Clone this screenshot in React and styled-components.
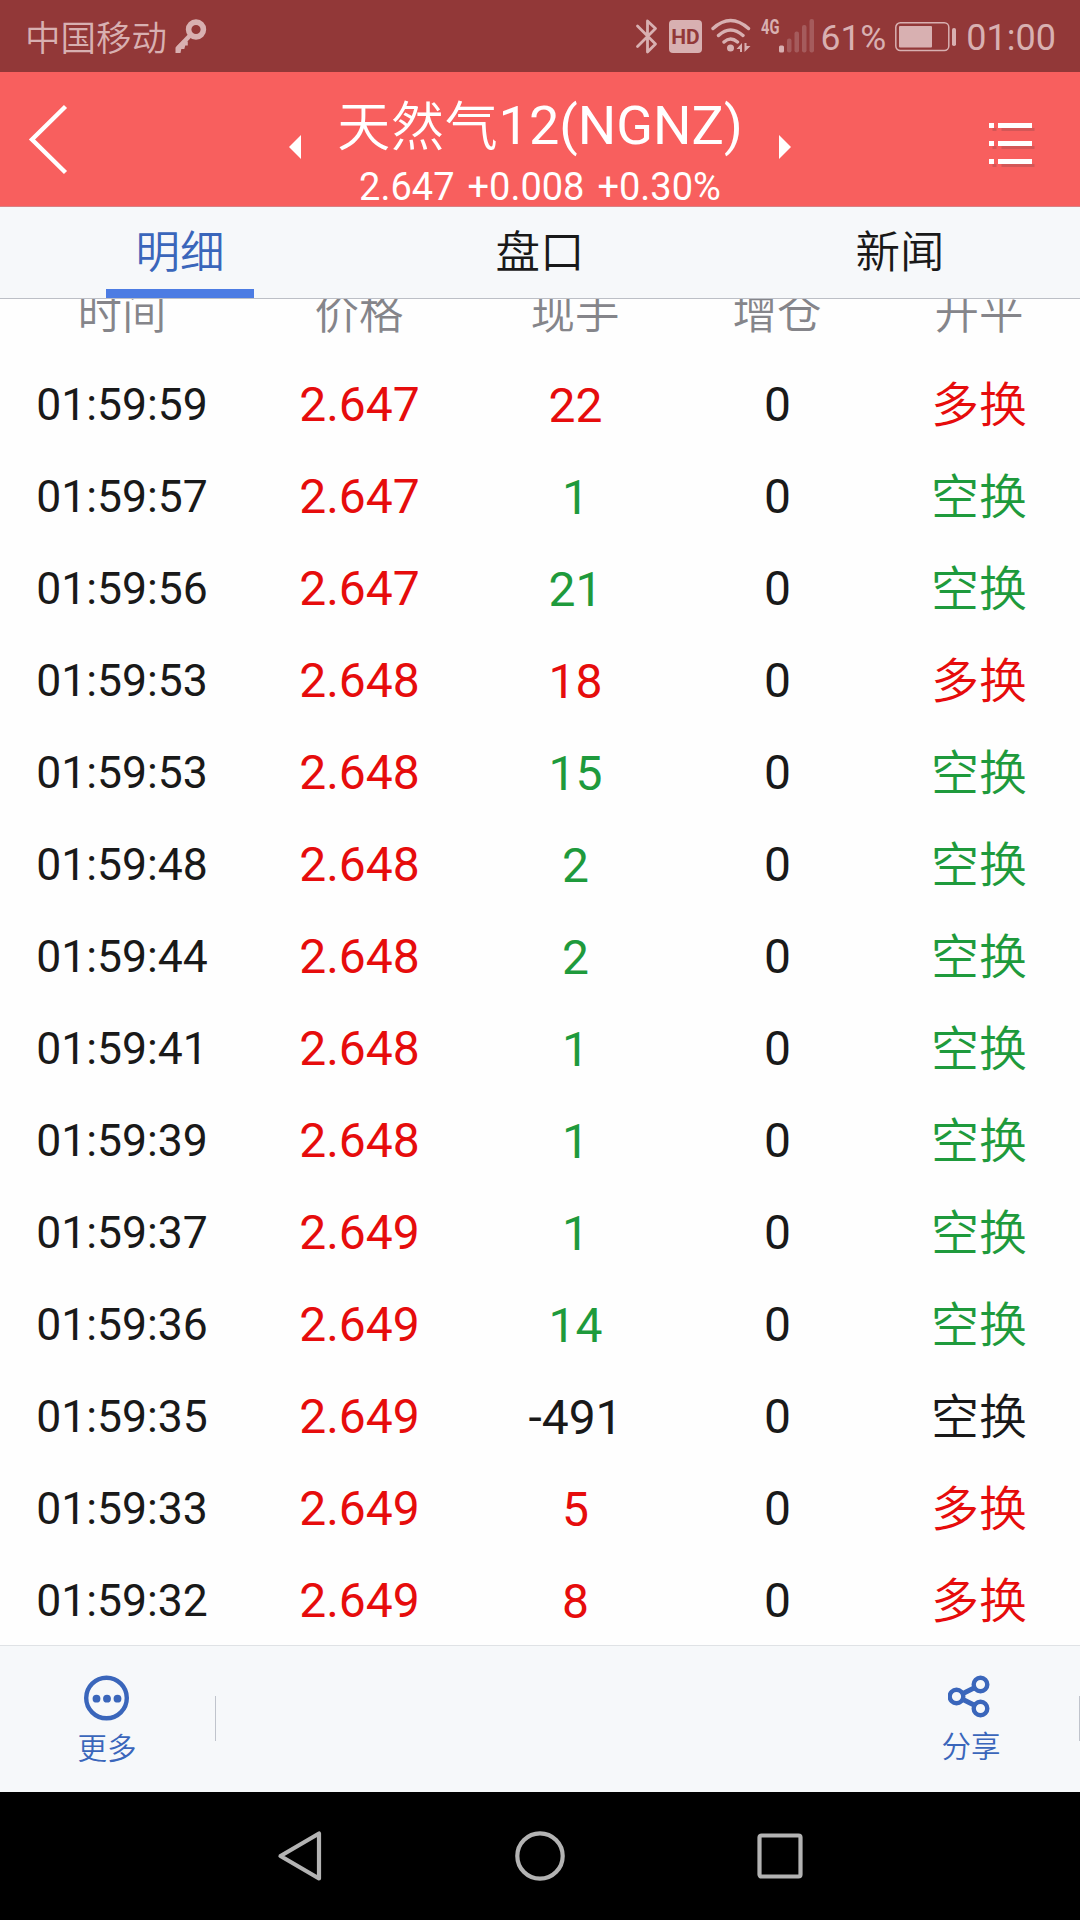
import React from "react";
import styled, { createGlobalStyle } from "styled-components";

const GlobalStyle = createGlobalStyle`
  * { box-sizing: border-box; }
  body { margin: 0; background: #fff; }
`;

const ink = "#d8b0b1";
const blue = "#3a66bb";
const cjk = `"Noto Sans CJK SC DemiLight", "Noto Sans CJK SC", sans-serif`;

const Screen = styled.div`
  width: 1080px;
  height: 1920px;
  display: flex;
  flex-direction: column;
  overflow: hidden;
  background: #fefefe;
  color: #191919;
  font-family: Roboto, ${cjk};
`;

const StatusBar = styled.div`
  height: 72px;
  flex: none;
  display: flex;
  align-items: center;
  justify-content: space-between;
  padding: 0 24px 0 25px;
  background: #923838;
  color: ${ink};
  font-size: 36px;
  line-height: 42px;
  svg { display: block; flex: none; }
`;

const StatusGroup = styled.div`
  display: flex;
  align-items: center;
`;

const StatusText = styled.span`
  padding-top: 3px;
  white-space: nowrap;
  margin-left: ${(p) => p.$left || 0}px;
`;

const Carrier = styled.span`
  padding-top: 5px;
  margin-right: 6px;
  font-size: 35.5px;
  font-weight: 350;
`;

const Percent = styled(StatusText)`
  font-size: 35.5px;
`;

const HdBadge = styled.span`
  width: 33px;
  height: 33px;
  margin: 0 9.5px 0 11px;
  border-radius: 4px;
  background: ${ink};
  color: #923838;
  font: 700 21px/35px Roboto, sans-serif;
  text-align: center;
`;

const NetworkLabel = styled.span`
  width: 18px;
  height: 34px;
  margin-left: 9.5px;
  font: 700 21px/16px Roboto, sans-serif;
  span {
    display: inline-block;
    transform: scaleX(0.7);
    transform-origin: left;
  }
`;

const Header = styled.header`
  height: 135px;
  flex: none;
  display: grid;
  grid-template-columns: 289px 502px 289px;
  background: #f85f5e;
  border-bottom: 1px solid #d98184;
  color: #fff;
  svg { display: block; }
`;

const BackButton = styled.div`
  padding: 32px 0 0 28px;
`;

const MenuButton = styled.div`
  padding: 49px 0 0 193.5px;
`;

const TitleRow = styled.div`
  display: flex;
  justify-content: space-between;
`;

const Arrow = styled.div`
  width: 12px;
  padding-top: 63px;
`;

const TitleBlock = styled.div`
  display: flex;
  flex-direction: column;
  align-items: center;
  white-space: nowrap;
`;

const Title = styled.div`
  display: flex;
  margin-top: 22px;
  font-size: 54px;
  line-height: 64px;
`;

const TitleName = styled.span`
  padding-top: 2px;
  font-size: 53px;
  font-weight: 350;
  letter-spacing: 0.8px;
`;

const Quote = styled.div`
  margin-top: 4px;
  font-size: 38px;
  line-height: 46px;
  word-spacing: 3.5px;
`;

const Tabs = styled.nav`
  height: 92px;
  flex: none;
  display: grid;
  grid-template-columns: repeat(3, 1fr);
  justify-items: center;
  background: #f6f8fa;
  border-bottom: 1px solid #bcbfc6;
`;

const Tab = styled.div`
  width: 148px;
  height: 91px;
  border-bottom: 9px solid ${(p) => (p.$active ? "#4c7ce3" : "transparent")};
  color: ${(p) => (p.$active ? blue : "#191919")};
  font-size: 44.5px;
  font-weight: 350;
  line-height: 92px;
  text-align: center;
`;

const Viewport = styled.main`
  height: 1346px;
  flex: none;
  overflow: hidden;
`;

const Row = styled.div`
  height: 92px;
  display: grid;
  grid-template-columns: 244px 230px 202px 202px 202px;
  line-height: 92px;
  text-align: center;
  font-size: 48px;
`;

const HeadRow = styled(Row)`
  margin-top: -32px;
  color: #85858a;
  font-size: 44.5px;
  font-weight: 350;
  line-height: 94px;
`;

const Time = styled.span`
  font-size: 44.5px;
`;

const tones = { red: "#e60c0c", green: "#1e9a3c", black: "#191919" };

const Value = styled.span`
  padding-left: 1px;
  color: ${(p) => tones[p.$tone || "black"]};
`;

const Lots = styled(Value)`
  line-height: 93px;
`;

const Side = styled(Value)`
  padding-left: 0;
  font-weight: 350;
  line-height: 94px;
`;

const Footer = styled.footer`
  height: 147px;
  flex: none;
  display: flex;
  justify-content: space-between;
  background: #f6f8fa;
  border-top: 1px solid #dfe2e5;
`;

const FooterItem = styled.div`
  width: 216px;
  display: grid;
  grid-template-columns: 215px 1px;
`;

const FooterAction = styled.div`
  display: flex;
  flex-direction: column;
  align-items: center;
  padding: 29px 1px 0 0;
  color: ${blue};
  font-size: 29.5px;
  font-weight: 350;
  line-height: 36px;
  svg { display: block; }
`;

const FooterLabel = styled.span`
  margin-top: ${(p) => p.$gap}px;
`;

const Divider = styled.i`
  height: 45px;
  margin-top: 50px;
  background: #c0c4cc;
`;

const SystemNav = styled.div`
  height: 128px;
  flex: none;
  display: flex;
  justify-content: center;
  align-items: center;
  gap: 180px;
  background: #000;
`;

const trades = [
  ["01:59:59", "2.647", "22", "red"],
  ["01:59:57", "2.647", "1", "green"],
  ["01:59:56", "2.647", "21", "green"],
  ["01:59:53", "2.648", "18", "red"],
  ["01:59:53", "2.648", "15", "green"],
  ["01:59:48", "2.648", "2", "green"],
  ["01:59:44", "2.648", "2", "green"],
  ["01:59:41", "2.648", "1", "green"],
  ["01:59:39", "2.648", "1", "green"],
  ["01:59:37", "2.649", "1", "green"],
  ["01:59:36", "2.649", "14", "green"],
  ["01:59:35", "2.649", "-491", "black"],
  ["01:59:33", "2.649", "5", "red"],
  ["01:59:32", "2.649", "8", "red"],
];

const KeyIcon = () => (
  <svg width="34" height="36" viewBox="0 0 34 36" fill="none" stroke={ink}>
    <circle cx="23" cy="11.500" r="7.400" strokeWidth="5.600" />
    <path d="M17 17.500L5 30" strokeWidth="4.600" />
    <path d="M2.500 29.500V35H7.500l.8-4h3l1-3.500h2.500v-4l-5-1z" fill={ink} stroke="none" />
  </svg>
);

const BluetoothIcon = () => (
  <svg width="24" height="36" viewBox="0 0 24 36" fill="none" stroke={ink} strokeWidth="2.800" strokeLinecap="round" strokeLinejoin="round">
    <path d="M3.500 8L21.500 26 13.500 34V3L21.500 10.500 3.500 28.500" />
  </svg>
);

const WifiIcon = () => (
  <svg width="40" height="36" viewBox="0 0 40 36" fill="none" stroke={ink} strokeWidth="3.400" strokeLinecap="round">
    <path d="M2 10.500Q19.500-5.500 37.500 10.500M7.500 17.500Q19.500 6.500 32 17.500M13 24Q19.500 18 26.500 24" />
    <circle cx="19.500" cy="30" r="3.500" fill={ink} stroke="none" />
    <path d="M25.500 31l5.500-6v9H29v-3zM33.500 25v9l6-6h-4v-3z" fill={ink} stroke="none" />
  </svg>
);

const SignalIcon = () => (
  <svg width="36" height="36" viewBox="0 0 36 36" fill="#a55b5c">
    <rect x="0" y="27.500" width="5" height="7" rx="1.500" fill={ink} />
    <rect x="8" y="20.500" width="4.500" height="14" rx="2" />
    <rect x="15.500" y="13.500" width="4.500" height="21" rx="2" />
    <rect x="23" y="7" width="4.500" height="27.500" rx="2" />
    <rect x="30.500" y="1" width="4.500" height="33.500" rx="2" />
  </svg>
);

const BatteryIcon = () => (
  <svg width="62" height="30" viewBox="0 0 62 30">
    <rect x="0.800" y="0.800" width="53" height="27.700" rx="4.500" fill="none" stroke={ink} strokeWidth="1.500" />
    <rect x="4" y="4" width="33" height="21.500" rx="1" fill={ink} />
    <rect x="57" y="6" width="4" height="18" rx="1.800" fill={ink} />
  </svg>
);

const BatterySlot = styled.span`
  margin-left: 9px;
  padding-top: 1px;
`;

const MoreIcon = () => (
  <svg width="46" height="46" viewBox="0 0 46 46" fill={blue}>
    <circle cx="22.500" cy="23" r="20.300" fill="none" stroke={blue} strokeWidth="4.400" />
    <circle cx="12.500" cy="23.700" r="3.900" />
    <circle cx="23" cy="23.700" r="3.900" />
    <circle cx="33.500" cy="23.700" r="3.900" />
  </svg>
);

const ShareIcon = () => (
  <svg width="46" height="46" viewBox="0 0 46 46" fill="none" stroke={blue} strokeWidth="4.400">
    <path d="M15 18.500L27 12.500M15 24.500L27 30.500" strokeWidth="5" />
    <circle cx="8.500" cy="21.500" r="6.800" />
    <circle cx="32.500" cy="9.500" r="6.800" />
    <circle cx="32.500" cy="33.500" r="6.800" />
  </svg>
);

export default function App() {
  return (
    <Screen>
      <GlobalStyle />
      <StatusBar>
        <StatusGroup>
          <Carrier>中国移动</Carrier>
          <KeyIcon />
        </StatusGroup>
        <StatusGroup>
          <BluetoothIcon />
          <HdBadge>HD</HdBadge>
          <WifiIcon />
          <NetworkLabel><span>4G</span></NetworkLabel>
          <SignalIcon />
          <Percent $left={5.5}>61%</Percent>
          <BatterySlot><BatteryIcon /></BatterySlot>
          <StatusText $left={9}>01:00</StatusText>
        </StatusGroup>
      </StatusBar>

      <Header>
        <BackButton>
          <svg width="42" height="72" viewBox="0 0 42 72" fill="none" stroke="#fff" strokeWidth="4.400">
            <path d="M37.500 2.500L4 35.500l33.500 33" />
          </svg>
        </BackButton>
        <TitleRow>
          <Arrow>
            <svg width="12" height="24" fill="#fff"><path d="M0 12L12 0v24z" /></svg>
          </Arrow>
          <TitleBlock>
            <Title><TitleName>天然气</TitleName>12(NGNZ)</Title>
            <Quote>2.647 +0.008 +0.30%</Quote>
          </TitleBlock>
          <Arrow>
            <svg width="12" height="24" fill="#fff"><path d="M0 0L12 12 0 24z" /></svg>
          </Arrow>
        </TitleRow>
        <MenuButton>
          <svg width="52" height="52" viewBox="0 0 52 52">
            <g fill="#d35757">
              <path d="M7.500 7h4v3h-4zM16.500 7h33v3h-33zM7.500 25h4v3h-4zM16.500 25h33v3h-33zM7.500 43h4v3h-4zM16.500 43h33v3h-33z" />
            </g>
            <g fill="#fff">
              <path d="M4 2h5v5H4zM13 2h34v5H13zM4 20h5v5H4zM13 20h34v5H13zM4 38h5v5H4zM13 38h34v5H13z" />
            </g>
          </svg>
        </MenuButton>
      </Header>

      <Tabs>
        <Tab $active>明细</Tab>
        <Tab>盘口</Tab>
        <Tab>新闻</Tab>
      </Tabs>

      <Viewport>
        <HeadRow>
          <span>时间</span>
          <span>价格</span>
          <span>现手</span>
          <span>增仓</span>
          <span>开平</span>
        </HeadRow>
        {trades.map(([time, price, lots, tone]) => (
          <Row key={time + lots}>
            <Time>{time}</Time>
            <Value $tone="red">{price}</Value>
            <Lots $tone={tone}>{lots}</Lots>
            <Value>0</Value>
            <Side $tone={tone}>{tone === "red" ? "多换" : "空换"}</Side>
          </Row>
        ))}
      </Viewport>

      <Footer>
        <FooterItem>
          <FooterAction>
            <MoreIcon />
            <FooterLabel $gap={10}>更多</FooterLabel>
          </FooterAction>
          <Divider />
        </FooterItem>
        <FooterItem>
          <FooterAction>
            <ShareIcon />
            <FooterLabel $gap={8}>分享</FooterLabel>
          </FooterAction>
          <Divider />
        </FooterItem>
      </Footer>

      <SystemNav>
        <svg width="60" height="60" viewBox="0 0 60 60" fill="none" stroke="#b3b3b3" strokeWidth="4.200" strokeLinejoin="round">
          <path d="M10.500 30L49 7.500v45z" />
        </svg>
        <svg width="60" height="60" viewBox="0 0 60 60" fill="none" stroke="#b3b3b3" strokeWidth="4.200">
          <circle cx="30" cy="30" r="22.700" />
        </svg>
        <svg width="60" height="60" viewBox="0 0 60 60" fill="none" stroke="#b3b3b3" strokeWidth="4.200">
          <rect x="9.500" y="9.500" width="41" height="41" rx="2" />
        </svg>
      </SystemNav>
    </Screen>
  );
}
